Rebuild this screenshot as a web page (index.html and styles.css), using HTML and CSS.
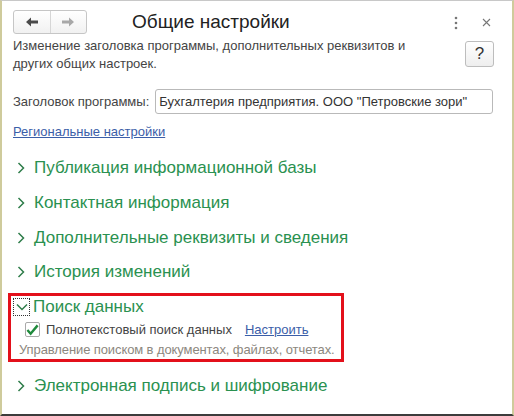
FILE: index.html
```html
<!DOCTYPE html>
<html lang="ru">
<head>
<meta charset="utf-8">
<link rel="stylesheet" href="styles.css">
</head>
<body>
<div class="window">
  <div class="header">
    <div class="nav">
      <div class="nav-btn">
        <svg width="14" height="10" viewBox="0 0 14 10"><path d="M1 5 L6 0.5 L6 3.5 L13 3.5 L13 6.5 L6 6.5 L6 9.5 Z" fill="#4a4a4a"/></svg>
      </div>
      <div class="nav-btn">
        <svg width="14" height="10" viewBox="0 0 14 10"><path d="M13 5 L8 0.5 L8 3.5 L1 3.5 L1 6.5 L8 6.5 L8 9.5 Z" fill="#a8a8a8"/></svg>
      </div>
    </div>
    <div class="title">Общие настройки</div>
    <div class="tools">
      <svg class="kebab" width="4" height="14" viewBox="0 0 4 14"><circle cx="2" cy="2" r="1.3" fill="#777"/><circle cx="2" cy="7" r="1.3" fill="#777"/><circle cx="2" cy="12" r="1.3" fill="#777"/></svg>
      <svg class="close" width="9" height="9" viewBox="0 0 9 9"><path d="M1 1 L8 8 M8 1 L1 8" stroke="#777" stroke-width="1.1"/></svg>
    </div>
  </div>

  <div class="content">
    <div class="intro">
      <div class="desc">Изменение заголовка программы, дополнительных реквизитов и других общих настроек.</div>
      <div class="help">?</div>
    </div>

    <div class="field">
      <span class="label">Заголовок программы:</span>
      <div class="input">Бухгалтерия предприятия. ООО "Петровские зори"</div>
    </div>

    <a class="link regional">Региональные настройки</a>

    <div class="groups">
      <div class="group"><span class="chev"><svg width="8" height="12" viewBox="0 0 8 12"><path d="M1.5 1 L6.5 6 L1.5 11" fill="none" stroke="#2f7d4a" stroke-width="1.5"/></svg></span>Публикация информационной базы</div>
      <div class="group"><span class="chev"><svg width="8" height="12" viewBox="0 0 8 12"><path d="M1.5 1 L6.5 6 L1.5 11" fill="none" stroke="#2f7d4a" stroke-width="1.5"/></svg></span>Контактная информация</div>
      <div class="group"><span class="chev"><svg width="8" height="12" viewBox="0 0 8 12"><path d="M1.5 1 L6.5 6 L1.5 11" fill="none" stroke="#2f7d4a" stroke-width="1.5"/></svg></span>Дополнительные реквизиты и сведения</div>
      <div class="group"><span class="chev"><svg width="8" height="12" viewBox="0 0 8 12"><path d="M1.5 1 L6.5 6 L1.5 11" fill="none" stroke="#2f7d4a" stroke-width="1.5"/></svg></span>История изменений</div>
    </div>

    <div class="highlight">
      <div class="group open"><span class="chev focus"><svg width="12" height="8" viewBox="0 0 12 8"><path d="M1 1.5 L6 6.5 L11 1.5" fill="none" stroke="#2f7d4a" stroke-width="1.5"/></svg></span>Поиск данных</div>
      <div class="check-row">
        <span class="checkbox"><svg width="14" height="12" viewBox="0 0 14 12"><path d="M1.5 6 L5 10 L12.5 1" fill="none" stroke="#1f8a3c" stroke-width="2.6"/></svg></span>
        <span class="check-label">Полнотекстовый поиск данных</span>
        <a class="link">Настроить</a>
      </div>
      <div class="note">Управление поиском в документах, файлах, отчетах.</div>
    </div>

    <div class="group last"><span class="chev"><svg width="8" height="12" viewBox="0 0 8 12"><path d="M1.5 1 L6.5 6 L1.5 11" fill="none" stroke="#2f7d4a" stroke-width="1.5"/></svg></span>Электронная подпись и шифрование</div>
  </div>
</div>
</body>
</html>
```

FILE: styles.css
```css
* { box-sizing: border-box; }
html, body { margin: 0; padding: 0; background: #fff; }
body { font-family: "Liberation Sans", Arial, sans-serif; color: #333; }

.window {
  width: 514px;
  height: 416px;
  border-left: 2px solid #cfcb9c;
  border-right: 2px solid #cfcb9c;
  border-top: 1px solid #c8c8c8;
  border-bottom: 2px solid #3c3c3c;
  background: #fff;
  overflow: hidden;
}

.header {
  display: flex;
  align-items: center;
  padding: 8px 0 0 11px;
  height: 33px;
}
.nav {
  display: flex;
  width: 74px;
  height: 24px;
  border: 1px solid #c6c6c6;
  border-radius: 3px;
  background: linear-gradient(#ffffff, #f1f1f1);
}
.nav-btn {
  flex: 1;
  display: flex;
  align-items: center;
  justify-content: center;
}
.nav-btn + .nav-btn { border-left: 1px solid #d6d6d6; }

.title {
  margin-left: 45px;
  font-size: 19px;
  color: #222;
  padding-top: 1px;
}
.tools {
  margin-left: auto;
  display: flex;
  align-items: center;
  padding-right: 21px;
  padding-top: 2px;
}
.kebab { margin-right: 24px; }

.content { padding: 0 0 0 11px; }

.intro {
  display: flex;
  align-items: flex-start;
  padding-top: 3px;
}
.desc {
  width: 430px;
  font-size: 13px;
  line-height: 18px;
  color: #444;
}
.help {
  margin-left: auto;
  margin-right: 18px;
  margin-top: 4px;
  width: 29px;
  height: 26px;
  border: 1px solid #bdbdbd;
  border-radius: 3px;
  background: linear-gradient(#ffffff, #eeeeee);
  font-size: 17px;
  color: #333;
  display: flex;
  align-items: center;
  justify-content: center;
}

.field {
  display: flex;
  align-items: center;
  margin-top: 16px;
}
.label { font-size: 13px; color: #444; }
.input {
  margin-left: 6px;
  width: 338px;
  height: 25px;
  border: 1px solid #b9b9b9;
  border-radius: 3px;
  font-size: 13px;
  color: #333;
  padding: 4px 0 0 3px;
  white-space: nowrap;
}

.link {
  color: #3b5ea8;
  text-decoration: underline;
  font-size: 13px;
}
.regional {
  display: block;
  margin-top: 10px;
}

.groups { margin-top: 12px; }
.group {
  display: flex;
  align-items: center;
  height: 34.7px;
  font-size: 17px;
  color: #2a9150;
}
.chev {
  width: 19px;
  display: flex;
  justify-content: flex-start;
  padding-left: 4px;
  margin-right: 2px;
}

.highlight {
  margin-left: -5px;
  width: 336px;
  border: 3px solid #e3101b;
  padding: 0 0 0 2px;
  margin-top: 3px;
}
.group.open { height: 23px; }
.chev.focus {
  width: 17px;
  height: 18px;
  padding-left: 0;
  justify-content: center;
  border: 1px dotted #333;
  align-items: center;
  margin-right: 3px;
}
.check-row {
  display: flex;
  align-items: center;
  padding-left: 12px;
  height: 22px;
}
.checkbox {
  width: 15px;
  height: 15px;
  border: 1px solid #a9a9a9;
  border-radius: 2px;
  display: flex;
  align-items: center;
  justify-content: center;
  margin-right: 6px;
}
.check-label { font-size: 13px; color: #444; margin-right: 13px; }
.note {
  font-size: 13px;
  color: #8c877e;
  padding-left: 6px;
  height: 18px;
  display: flex;
  align-items: center;
  white-space: nowrap;
  letter-spacing: -0.1px;
}
.group.last { margin-top: 7px; }
```
